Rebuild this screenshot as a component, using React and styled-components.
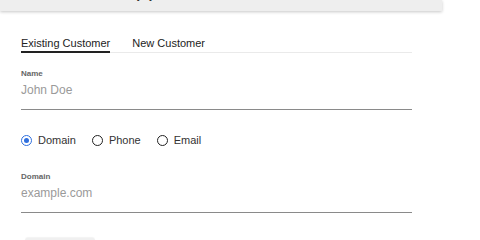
import React from "react";
import styled, { createGlobalStyle } from "styled-components";

const Global = createGlobalStyle`
  html, body { margin: 0; padding: 0; background: #fff; }
  body { font-family: "Liberation Sans", Arial, Helvetica, sans-serif; color: #222; }
`;

const Page = styled.div`
  width: 480px;
  height: 240px;
  overflow: hidden;
`;

const TopBar = styled.header`
  width: 442px;
  height: 11px;
  background: #eeeeee;
  box-shadow: 0 1px 3px rgba(0, 0, 0, 0.22);
  overflow: hidden;
`;

const Title = styled.div`
  font-size: 22px;
  line-height: 22px;
  margin-top: -22px;
  padding-left: 121px;
  color: #333;
`;

const Content = styled.main`
  width: 391px;
  padding: 26px 0 0 21px;
  display: flex;
  flex-direction: column;
`;

const Tabs = styled.div`
  display: flex;
  gap: 22px;
  border-bottom: 1px solid #eaeaea;
`;

const Tab = styled.div`
  font-size: 11px;
  line-height: 13px;
  padding-bottom: 1px;
  color: #222;
  border-bottom: 2px solid ${(p) => (p.$active ? "#222" : "transparent")};
  margin-bottom: -1px;
`;

const Field = styled.div`
  display: flex;
  flex-direction: column;
  margin-top: ${(p) => p.$top}px;
  border-bottom: 1.5px solid #8a8a8a;
`;

const Label = styled.div`
  font-size: 8px;
  font-weight: 700;
  line-height: 10px;
  color: #666;
`;

const Value = styled.div`
  font-size: 12px;
  line-height: 14px;
  padding: 4px 0 12px;
  color: #9a9a9a;
`;

const RadioRow = styled.div`
  display: flex;
  gap: 16px;
  margin-top: 24px;
`;

const RadioItem = styled.label`
  display: flex;
  align-items: center;
  gap: 6px;
  font-size: 11px;
  line-height: 13px;
  color: #333;
`;

const Circle = styled.span`
  box-sizing: border-box;
  width: 11px;
  height: 11px;
  border-radius: 50%;
  border: 1.5px solid ${(p) => (p.$checked ? "#2f6fde" : "#222")};
  display: flex;
  align-items: center;
  justify-content: center;
  &::after {
    content: "";
    width: 5px;
    height: 5px;
    border-radius: 50%;
    background: ${(p) => (p.$checked ? "#2f6fde" : "transparent")};
  }
`;

const Button = styled.button`
  margin-top: 25px;
  margin-left: 4px;
  width: 70px;
  height: 24px;
  border: none;
  border-radius: 3px;
  background: #f0f0f0;
  box-shadow: 0 -1px 1px rgba(0, 0, 0, 0.05);
  font-family: inherit;
`;

export default function App() {
  return (
    <Page>
      <Global />
      <TopBar>
        <Title>App</Title>
      </TopBar>
      <Content>
        <Tabs>
          <Tab $active>Existing Customer</Tab>
          <Tab>New Customer</Tab>
        </Tabs>
        <Field $top={16}>
          <Label>Name</Label>
          <Value>John Doe</Value>
        </Field>
        <RadioRow>
          {[
            ["Domain", true],
            ["Phone", false],
            ["Email", false],
          ].map(([t, c]) => (
            <RadioItem key={t}>
              <Circle $checked={c} />
              {t}
            </RadioItem>
          ))}
        </RadioRow>
        <Field $top={25}>
          <Label>Domain</Label>
          <Value>example.com</Value>
        </Field>
        <div>
          <Button />
        </div>
      </Content>
    </Page>
  );
}
